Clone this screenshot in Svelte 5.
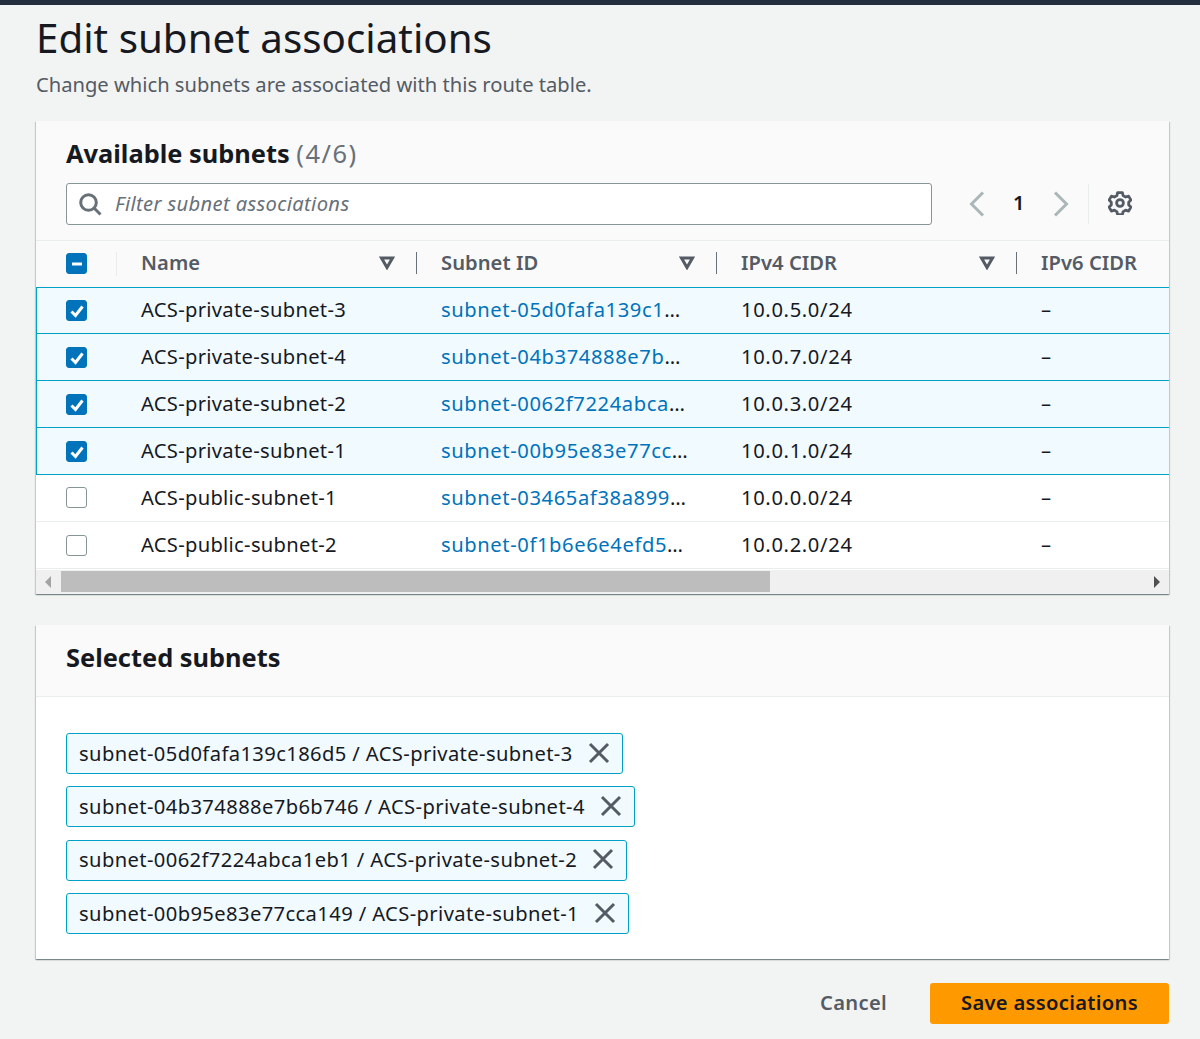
<script>
  const rows = [
    { name: 'ACS-private-subnet-3', id: 'subnet-05d0fafa139c186d5', cidr: '10.0.5.0/24', on: true },
    { name: 'ACS-private-subnet-4', id: 'subnet-04b374888e7b6b746', cidr: '10.0.7.0/24', on: true },
    { name: 'ACS-private-subnet-2', id: 'subnet-0062f7224abca1eb1', cidr: '10.0.3.0/24', on: true },
    { name: 'ACS-private-subnet-1', id: 'subnet-00b95e83e77cca149', cidr: '10.0.1.0/24', on: true },
    { name: 'ACS-public-subnet-1', id: 'subnet-03465af38a899c0d2', cidr: '10.0.0.0/24', on: false },
    { name: 'ACS-public-subnet-2', id: 'subnet-0f1b6e6e4efd5a1c3', cidr: '10.0.2.0/24', on: false },
  ]
  const columns = ['Name', 'Subnet ID', 'IPv4 CIDR']
  const selected = rows.filter((r) => r.on)
</script>

<div class="topbar"></div>

<main class="page">
  <h1>Edit subnet associations</h1>
  <p class="sub">Change which subnets are associated with this route table.</p>

  <section class="card first">
    <header class="head">
      <h2>Available subnets <span class="count">(4/6)</span></h2>
      <div class="tools">
        <div class="filter">
          <svg class="search" width="24" height="24" viewBox="0 0 24 24" fill="none" stroke="#687078" stroke-width="3">
            <circle cx="10.5" cy="10.5" r="7.8" />
            <path d="M16 16l6.5 6.5" />
          </svg>
          <span>Filter subnet associations</span>
        </div>
        <div class="pager">
          <svg width="16" height="26" viewBox="0 0 16 26" fill="none" stroke="#aab7b8" stroke-width="3"><path d="M14 1.5L2.5 13 14 24.5" /></svg>
          <b>1</b>
          <svg width="16" height="26" viewBox="0 0 16 26" fill="none" stroke="#aab7b8" stroke-width="3"><path d="M2 1.5L13.5 13 2 24.5" /></svg>
        </div>
        <div class="gear">
          <svg width="24" height="24" viewBox="0 0 24 24" fill="none" stroke="#545b64" stroke-width="2.8" stroke-linejoin="round">
            <path d="M9.6 1.6h4.8l.7 3 2.5 1.4 3-.9 2.3 4-2.2 2.1v2.8l2.2 2.1-2.3 4-3-.9-2.5 1.4-.7 3H9.6l-.7-3-2.5-1.4-3 .9-2.3-4 2.2-2.1v-2.8L1.1 9.1l2.3-4 3 .9 2.5-1.4z" />
            <circle cx="12" cy="12" r="3.4" />
          </svg>
        </div>
      </div>
    </header>

    <div class="table">
      <div class="tr th">
        <div class="check">
          <span class="box on">
            <svg width="22" height="22" viewBox="0 0 22 22"><path d="M6 11h10" stroke="#fff" stroke-width="3" /></svg>
          </span>
          <i class="thin"></i>
        </div>
        {#each columns as col}
          <div class="cell">
            <span>{col}</span>
            <svg class="caret" width="16" height="14" viewBox="0 0 16 14" fill="none" stroke="#545b64" stroke-width="3" stroke-linejoin="miter"><path d="M2.5 2h11L8 11.5z" /></svg>
            <i class="divider"></i>
          </div>
        {/each}
        <div class="cell"><span>IPv6 CIDR</span></div>
      </div>

      {#each rows as row, i}
        <div class="tr body" class:sel={row.on} class:top={i === 0} class:after={i === 4}>
          <div class="check">
            <span class="box" class:on={row.on}>
              {#if row.on}
                <svg width="22" height="22" viewBox="0 0 22 22" fill="none"><path d="M5.5 11.5l4 4 7-9" stroke="#fff" stroke-width="3" /></svg>
              {/if}
            </span>
          </div>
          <div class="cell name">{row.name}</div>
          <div class="cell"><div class="trunc"><a class="link" href="#top">{row.id}</a></div></div>
          <div class="cell cidr">{row.cidr}</div>
          <div class="cell">–</div>
        </div>
      {/each}
    </div>

    <div class="scrollbar">
      <span class="arrow left"></span>
      <span class="thumb"></span>
      <span class="arrow right"></span>
    </div>
  </section>

  <section class="card second">
    <header class="head small">
      <h2>Selected subnets</h2>
    </header>
    <div class="tokens">
      {#each selected as row}
        <div class="token">
          <span>{row.id} / {row.name}</span>
          <svg width="22" height="22" viewBox="0 0 22 22" fill="none" stroke="#545b64" stroke-width="3"><path d="M2 2l18 18M20 2L2 20" /></svg>
        </div>
      {/each}
    </div>
  </section>

  <footer class="actions">
    <button class="cancel">Cancel</button>
    <button class="save">Save associations</button>
  </footer>
</main>

<style>
  :global(body) {
    background: #f2f3f3;
    font-family: "Noto Sans", "Open Sans", sans-serif;
    color: #16191f;
  }

  .topbar {
    height: 5px;
    background: #232f3e;
  }

  .page {
    padding: 0 31px 0 36px;
    height: 1034px;
    overflow: hidden;
  }

  h1 {
    margin: 0;
    padding-top: 4px;
    font-size: 40.32px;
    line-height: 57px;
    font-weight: 400;
  }

  .sub {
    margin: 4px 0 0;
    font-size: 20.16px;
    line-height: 29px;
    color: #545b64;
  }

  .card {
    background: #fff;
    box-shadow: 0 1px 1px 0 rgba(0, 28, 36, 0.3), 1px 1px 1px 0 rgba(0, 28, 36, 0.15), -1px 1px 1px 0 rgba(0, 28, 36, 0.15);
    overflow: hidden;
  }

  .first {
    margin-top: 22px;
  }

  .second {
    margin-top: 31px;
  }

  .head {
    background: #fafafa;
    border-bottom: 1px solid #eaeded;
    padding: 14px 30px 0;
    height: 105px;
    box-sizing: content-box;
  }

  .head.small {
    height: 57px;
  }

  h2 {
    margin: 0;
    font-size: 25.4px;
    line-height: 36px;
    font-weight: 700;
  }

  .count {
    font-weight: 400;
    color: #687078;
    letter-spacing: 1.5px;
  }

  .tools {
    display: flex;
    align-items: center;
    margin-top: 12px;
  }

  .filter {
    width: 866px;
    height: 42px;
    box-sizing: border-box;
    flex: none;
    display: flex;
    align-items: center;
    gap: 13px;
    padding-left: 11px;
    background: #fff;
    border: 1px solid #879596;
    border-radius: 3px;
    font-size: 20.16px;
    letter-spacing: 0.35px;
    font-style: italic;
    color: #687078;
  }

  .filter span {
    padding-bottom: 2px;
  }

  .pager {
    display: flex;
    align-items: center;
    margin-left: 37px;
    gap: 28px;
  }

  .pager b {
    font-size: 20.16px;
    font-weight: 600;
    line-height: 28px;
    margin-bottom: 4px;
  }

  .gear {
    margin-left: 19px;
    height: 40px;
    padding-left: 19px;
    display: flex;
    align-items: center;
    border-left: 1px solid #eaeded;
  }

  .gear svg {
    margin-bottom: 2px;
  }

  .table {
    width: 1400px;
  }

  .tr {
    display: flex;
    align-items: center;
    height: 47px;
    box-sizing: border-box;
    font-size: 20.16px;
  }

  .tr.th {
    height: 46px;
    background: #fafafa;
    font-weight: 600;
    color: #545b64;
  }

  .body {
    border-bottom: 1px solid #eaeded;
    border-left: 1px solid transparent;
  }

  .body.sel {
    background: #f1faff;
    border-top: 1px solid #00a1c9;
    border-bottom: 1px solid #00a1c9;
    border-left: 1px solid #00a1c9;
    margin-bottom: -1px;
    height: 48px;
  }

  .body.top {
    height: 47px;
  }

  .body.after {
    height: 48px;
  }

  .body .cell {
    padding-bottom: 2px;
  }

  .body.top .cell {
    padding-bottom: 3px;
  }

  .check {
    flex: none;
    width: 80px;
    height: 100%;
    box-sizing: border-box;
    padding-left: 30px;
    display: flex;
    align-items: center;
    position: relative;
  }

  .th .check {
    padding-bottom: 2px;
  }

  .body .check {
    padding-left: 29px;
    width: 79px;
  }

  .thin {
    position: absolute;
    right: -1px;
    top: 11px;
    height: 24px;
    border-left: 1px solid #eaeded;
  }

  .box {
    width: 21px;
    height: 21px;
    box-sizing: border-box;
    border: 1px solid #879596;
    border-radius: 3px;
    background: #fff;
    display: block;
    position: relative;
  }

  .box.on {
    background: #0073bb;
    border-color: #0073bb;
  }

  .box svg {
    position: absolute;
    left: -1px;
    top: -1px;
  }

  .cell {
    flex: none;
    width: 300px;
    box-sizing: border-box;
    padding: 0 25px;
    position: relative;
    height: 100%;
    display: flex;
    align-items: center;
    white-space: nowrap;
    color: #16191f;
  }

  .th .cell {
    color: #545b64;
    letter-spacing: 0.05px;
    padding-bottom: 5px;
  }

  .name {
    letter-spacing: 0.3px;
  }

  .cidr {
    letter-spacing: 0.65px;
  }

  .trunc {
    width: 249px;
    overflow: hidden;
    text-overflow: ellipsis;
    letter-spacing: 0.6px;
  }

  .link {
    color: #0073bb;
    text-decoration: none;
  }

  .caret {
    position: absolute;
    right: 21px;
    top: 15px;
  }

  .divider {
    position: absolute;
    right: -1px;
    top: 11px;
    height: 22px;
    border-left: 1px solid #687078;
  }

  .scrollbar {
    height: 24px;
    background: #f0f0f0;
    margin-top: 1px;
    position: relative;
    display: flex;
    align-items: center;
  }

  .thumb {
    position: absolute;
    left: 25px;
    top: 1px;
    width: 709px;
    height: 21px;
    background: #bdbdbd;
  }

  .arrow {
    position: absolute;
    top: 6px;
    border-top: 6px solid transparent;
    border-bottom: 6px solid transparent;
  }

  .left {
    left: 9px;
    border-right: 6px solid #a3a3a3;
  }

  .right {
    right: 9px;
    border-left: 6px solid #505050;
  }

  .tokens {
    display: flex;
    flex-direction: column;
    align-items: flex-start;
    gap: 12.4px;
    padding: 36px 30px 25px;
  }

  .token {
    height: 41px;
    box-sizing: border-box;
    display: flex;
    align-items: center;
    gap: 15px;
    padding: 0 12px;
    background: #f1faff;
    border: 1px solid #00a1c9;
    border-radius: 3px;
    font-size: 20.16px;
    letter-spacing: 0.39px;
    white-space: nowrap;
  }

  .token span {
    padding-bottom: 2px;
  }

  .token svg {
    margin-bottom: 2px;
  }

  .actions {
    display: flex;
    justify-content: flex-end;
    align-items: center;
    margin-top: 24px;
    gap: 43px;
  }

  button {
    font-family: inherit;
    font-size: 20.16px;
    font-weight: 600;
    letter-spacing: 0.3px;
    border: 0;
    padding: 0 0 4px;
    height: 41px;
    background: none;
  }

  .cancel {
    color: #545b64;
  }

  .save {
    width: 239px;
    background: #ff9900;
    color: #16191f;
    border-radius: 3px;
  }
</style>
